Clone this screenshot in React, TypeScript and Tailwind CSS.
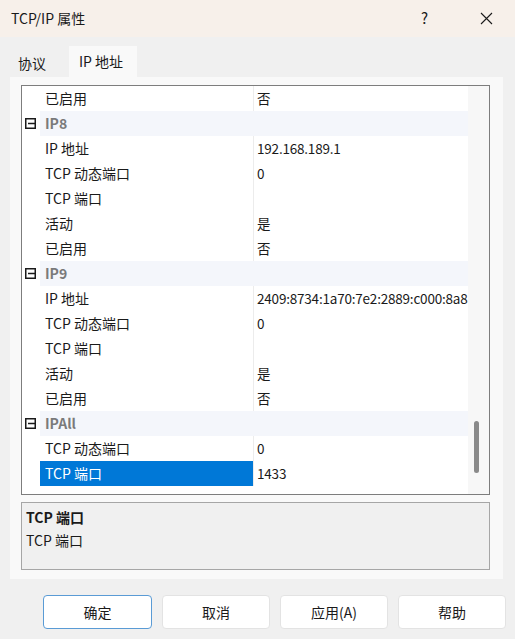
const FONT = { fontFamily: '"Segoe UI", "Noto Sans CJK SC", "Noto Sans", sans-serif' };

type Row =
  | { kind: 'group'; label: string }
  | { kind: 'prop'; name: string; value: string; selected?: boolean };

const rows: Row[] = [
  { kind: 'prop', name: '已启用', value: '否' },
  { kind: 'group', label: 'IP8' },
  { kind: 'prop', name: 'IP 地址', value: '192.168.189.1' },
  { kind: 'prop', name: 'TCP 动态端口', value: '0' },
  { kind: 'prop', name: 'TCP 端口', value: '' },
  { kind: 'prop', name: '活动', value: '是' },
  { kind: 'prop', name: '已启用', value: '否' },
  { kind: 'group', label: 'IP9' },
  { kind: 'prop', name: 'IP 地址', value: '2409:8734:1a70:7e2:2889:c000:8a8' },
  { kind: 'prop', name: 'TCP 动态端口', value: '0' },
  { kind: 'prop', name: 'TCP 端口', value: '' },
  { kind: 'prop', name: '活动', value: '是' },
  { kind: 'prop', name: '已启用', value: '否' },
  { kind: 'group', label: 'IPAll' },
  { kind: 'prop', name: 'TCP 动态端口', value: '0' },
  { kind: 'prop', name: 'TCP 端口', value: '1433', selected: true },
];

function CollapseBox() {
  return (
    <svg width="11" height="11" viewBox="0 0 11 11">
      <rect x="0.75" y="0.75" width="9.5" height="9.5" fill="none" stroke="#1a1a1a" strokeWidth="1.5" />
      <line x1="3" y1="5.5" x2="10" y2="5.5" stroke="#1a1a1a" strokeWidth="1.5" />
    </svg>
  );
}

function GridRow({ row }: { row: Row }) {
  if (row.kind === 'group') {
    return (
      <div className="flex h-[25px]">
        <div className="flex w-[18px] items-center justify-start pl-[3px]">
          <CollapseBox />
        </div>
        <div className="flex flex-1 items-center bg-[#f4f6fb] pl-[5px] text-[14px] font-bold text-[#7a7a7a]">
          {row.label}
        </div>
      </div>
    );
  }
  return (
    <div className="flex h-[25px]">
      <div className="w-[18px]" />
      <div
        className={
          row.selected
            ? 'flex w-[213px] items-center bg-[#0078d7] pl-[5px] text-[14px] text-white'
            : 'flex w-[213px] items-center pl-[5px] text-[14px] text-[#1a1a1a]'
        }
      >
        {row.name}
      </div>
      <div className="w-px bg-[#ececec]" />
      <div className="flex min-w-0 flex-1 items-center overflow-hidden whitespace-nowrap pl-[3px] text-[13.5px] tracking-[-0.2px] text-[#1a1a1a]">
        {row.value}
      </div>
    </div>
  );
}

export default function App() {
  return (
    <div className="flex h-[639px] w-[515px] flex-col overflow-hidden bg-[#f0f0f0]" style={FONT}>
      <div className="flex h-[37px] items-center bg-[#f7f0ea] pl-[11px] text-[14px] text-[#1a1a1a]">
        <span>TCP/IP 属性</span>
        <span className="ml-auto mr-[52px] text-[15px]">?</span>
        <svg width="13" height="13" viewBox="0 0 13 13" className="mr-[22px]">
          <path d="M1 1 L12 12 M12 1 L1 12" stroke="#1a1a1a" strokeWidth="1.1" />
        </svg>
      </div>

      <div className="mt-[9px] flex h-[31px] items-end pl-[11px] text-[14px] text-[#1a1a1a]">
        <div className="flex h-[29px] w-[58px] items-center bg-[#f0f0f0] pl-[7px] pt-[2px]">协议</div>
        <div className="flex h-[31px] w-[68px] items-center bg-[#f9f9f9] pl-[10px]">IP 地址</div>
      </div>

      <div className="ml-[10px] flex h-[502px] w-[493px] flex-col bg-[#f9f9f9] pl-[11px] pt-[8px]">
        <div className="flex h-[410px] w-[469px] border border-[#7d7d7d] bg-white">
          <div className="flex min-w-0 flex-1 flex-col overflow-hidden">
            {rows.map((r, i) => (
              <GridRow key={i} row={r} />
            ))}
          </div>
          <div className="flex w-[21px] flex-col items-center bg-[#f7f7f7] pt-[335px]">
            <div className="ml-[-5px] h-[52px] w-[5px] rounded-full bg-[#8a8a8a]" />
          </div>
        </div>

        <div className="mt-[7px] h-[68px] w-[469px] border border-[#a6a6a6] bg-[#f0f0f0] px-[4px] pt-[3px] text-[14px] text-[#1a1a1a]">
          <div className="font-bold leading-[22px]">TCP 端口</div>
          <div className="leading-[24px]">TCP 端口</div>
        </div>
      </div>

      <div className="mt-[16px] flex gap-[10px] pl-[43px] text-[14px] text-[#1a1a1a]">
        <button className="flex h-[34px] w-[109px] items-center justify-center rounded-[4px] border border-[#5a9bd5] bg-white">
          确定
        </button>
        <button className="flex h-[34px] w-[108px] items-center justify-center rounded-[4px] border border-[#e3e3e3] bg-white">
          取消
        </button>
        <button className="flex h-[34px] w-[108px] items-center justify-center rounded-[4px] border border-[#e3e3e3] bg-white">
          应用(A)
        </button>
        <button className="flex h-[34px] w-[108px] items-center justify-center rounded-[4px] border border-[#e3e3e3] bg-white">
          帮助
        </button>
      </div>
    </div>
  );
}
